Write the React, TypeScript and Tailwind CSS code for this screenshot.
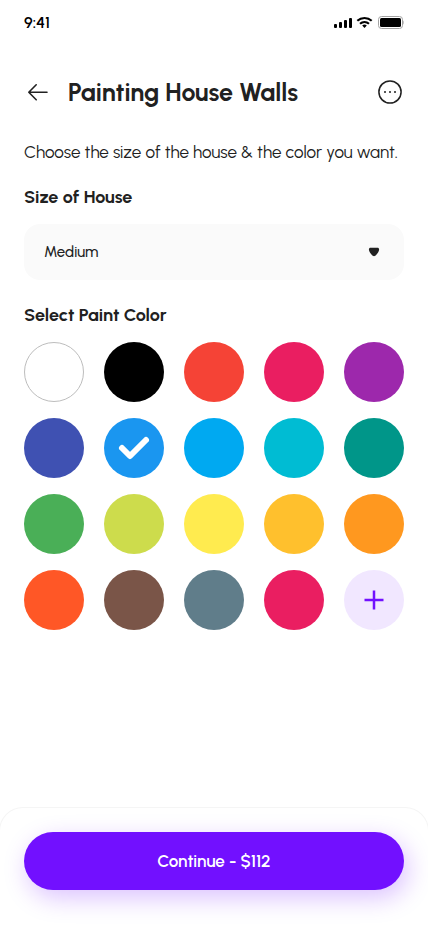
import React, { useState } from 'react';

interface PaintColor {
  id: string;
  label: string;
  className: string;
}

const COLORS: PaintColor[] = [
  { id: 'white', label: 'White', className: 'bg-white border border-[#bdbdbd]' },
  { id: 'black', label: 'Black', className: 'bg-black' },
  { id: 'red', label: 'Red', className: 'bg-[#f54336]' },
  { id: 'pink', label: 'Pink', className: 'bg-[#ea1e61]' },
  { id: 'purple', label: 'Purple', className: 'bg-[#9d28ac]' },
  { id: 'indigo', label: 'Indigo', className: 'bg-[#3f51b2]' },
  { id: 'blue', label: 'Blue', className: 'bg-[#1a96f0]' },
  { id: 'sky', label: 'Light blue', className: 'bg-[#00a9f1]' },
  { id: 'cyan', label: 'Cyan', className: 'bg-[#00bcd3]' },
  { id: 'teal', label: 'Teal', className: 'bg-[#009689]' },
  { id: 'green', label: 'Green', className: 'bg-[#4aaf57]' },
  { id: 'lime', label: 'Lime', className: 'bg-[#cddc4c]' },
  { id: 'yellow', label: 'Yellow', className: 'bg-[#ffeb4f]' },
  { id: 'amber', label: 'Amber', className: 'bg-[#ffc02d]' },
  { id: 'orange', label: 'Orange', className: 'bg-[#ff981f]' },
  { id: 'deep-orange', label: 'Deep orange', className: 'bg-[#ff5726]' },
  { id: 'brown', label: 'Brown', className: 'bg-[#7a5548]' },
  { id: 'blue-grey', label: 'Blue grey', className: 'bg-[#607d8a]' },
  { id: 'rose', label: 'Rose', className: 'bg-[#ea1e61]' },
];

const StatusBar: React.FC = () => (
  <div className="flex h-11 items-center justify-between px-6 text-black">
    <span className="pt-0.5 text-base font-semibold leading-6">9:41</span>
    <svg width="72" height="14" viewBox="0 0 72 14" aria-hidden="true">
      <rect x="2" y="9" width="3" height="4" rx="1" />
      <rect x="7" y="7" width="3" height="6" rx="1" />
      <rect x="12" y="5" width="3" height="8" rx="1" />
      <rect x="17" y="3" width="3" height="10" rx="1" />
      <g fill="none" stroke="currentColor" strokeWidth="2.1">
        <path d="M25.3 5.8a10.6 10.6 0 0 1 14.4 0" />
        <path d="M28 8.8a6.8 6.8 0 0 1 9 0" />
      </g>
      <path d="M32.5 12.9l-2.3-2.3a3.5 3.5 0 0 1 4.6 0z" />
      <rect x="46.5" y="1.5" width="24" height="12" rx="3" fill="none" stroke="#a3a3a3" />
      <rect x="48" y="3" width="21" height="9" rx="1.5" />
      <path d="M71.3 5.5v4c.9-.6.9-3.4 0-4z" fill="#a3a3a3" />
    </svg>
  </div>
);

const App: React.FC = () => {
  const [size, setSize] = useState<string>('Medium');
  const [color, setColor] = useState<string>('blue');

  return (
    <div className="flex min-h-screen flex-col overflow-x-hidden bg-white font-['Urbanist','Lato',sans-serif] text-[#212121]">
      <StatusBar />

      <header className="mt-6 flex h-12 items-center gap-4 px-6">
        <button type="button" aria-label="Back">
          <svg width="28" height="28" viewBox="0 0 28 28" fill="none" stroke="currentColor" strokeWidth="1.6" strokeLinecap="round" strokeLinejoin="round">
            <path d="M23 14.3H4.8M12.2 6.8L4.8 14.3l7.4 7.5" />
          </svg>
        </button>
        <h1 className="flex-1 text-[25px] font-bold leading-8">Painting House Walls</h1>
        <button type="button" aria-label="More options">
          <svg width="28" height="28" viewBox="0 0 28 28" fill="currentColor">
            <circle cx="14" cy="14" r="11.1" fill="none" stroke="currentColor" strokeWidth="1.5" />
            <circle cx="9" cy="14" r="1" />
            <circle cx="14" cy="14" r="1" />
            <circle cx="19" cy="14" r="1" />
          </svg>
        </button>
      </header>

      <main className="px-6 pb-6">
        <p className="mt-6 text-[17px] leading-6">Choose the size of the house &amp; the color you want.</p>

        <label htmlFor="size" className="mt-5 block text-lg font-bold leading-[26px]">Size of House</label>
        <div className="relative mt-3.5">
          <select
            id="size"
            value={size}
            onChange={(e) => setSize(e.target.value)}
            className="h-14 w-full appearance-none rounded-2xl bg-[#fafafa] px-5 text-[15px] font-medium outline-none"
          >
            <option>Small</option>
            <option>Medium</option>
            <option>Large</option>
          </select>
          <svg className="pointer-events-none absolute inset-y-0 right-5 my-auto" width="20" height="20" viewBox="0 0 20 20" fill="currentColor" aria-hidden="true">
            <path d="M10 14.3C8.6 14.3 4.9 9.9 4.9 7.4C4.9 6.4 5.5 5.7 6.7 5.7H13.3C14.5 5.7 15.1 6.4 15.1 7.4C15.1 9.9 11.4 14.3 10 14.3Z" />
          </svg>
        </div>

        <fieldset className="mt-[22px]">
          <legend className="text-lg font-bold leading-[26px]">Select Paint Color</legend>
          <div className="mt-3.5 grid grid-cols-[repeat(auto-fill,60px)] justify-between gap-4">
            {COLORS.map((c) => (
              <label key={c.id} className={`relative flex size-15 cursor-pointer items-center justify-center rounded-full ${c.className}`}>
                <input
                  type="radio"
                  name="color"
                  value={c.id}
                  aria-label={c.label}
                  checked={color === c.id}
                  onChange={() => setColor(c.id)}
                  className="sr-only"
                />
                {color === c.id && (
                  <svg width="60" height="60" viewBox="0 0 60 60" fill="none" stroke={c.id === 'white' ? '#212121' : '#ffffff'} strokeWidth="6" strokeLinecap="round" strokeLinejoin="round" aria-hidden="true">
                    <path d="M18 30l8 8 16-16" />
                  </svg>
                )}
              </label>
            ))}
            <button type="button" aria-label="Add color" className="flex size-15 items-center justify-center rounded-full bg-[#f1e7ff] text-[#7210ff]">
              <svg width="24" height="24" viewBox="0 0 24 24" fill="none" stroke="currentColor" strokeWidth="2.5">
                <path d="M12 2.5v19M2.5 12h19" />
              </svg>
            </button>
          </div>
        </fieldset>
      </main>

      <footer className="-mx-px mt-auto rounded-t-3xl border border-b-0 border-[#f5f5f5] px-6 pt-6 pb-9">
        <button
          type="button"
          className="h-[58px] w-full rounded-full bg-[#7210ff] pt-0.5 text-[17px] font-semibold text-white shadow-[4px_8px_24px_rgba(114,16,255,0.25)]"
        >
          Continue - $112
        </button>
      </footer>
    </div>
  );
};

export default App;
